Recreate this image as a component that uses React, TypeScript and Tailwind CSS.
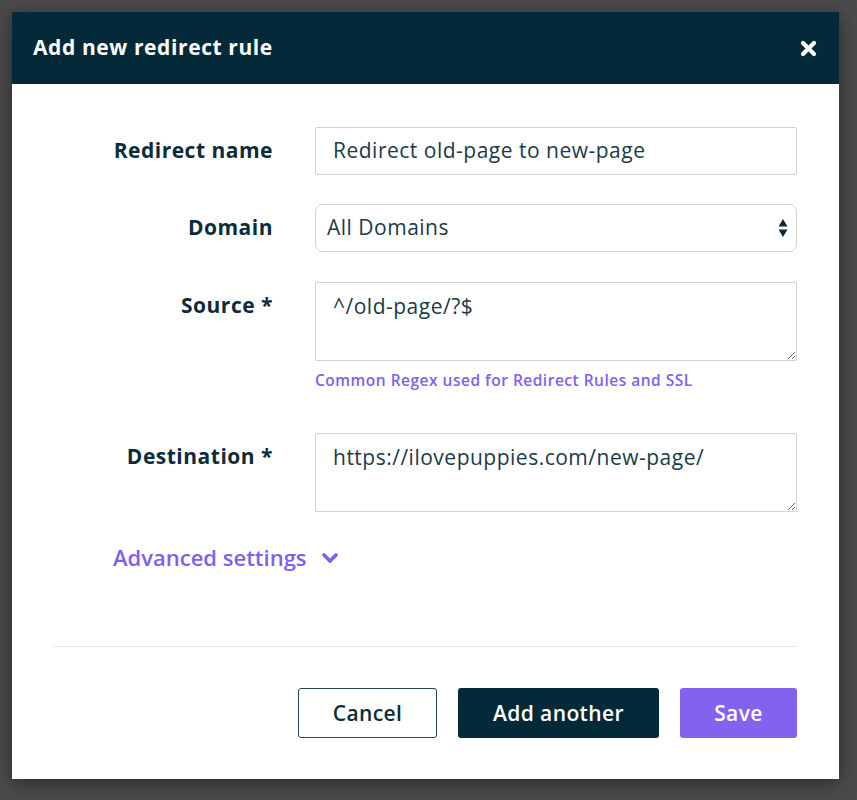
import React from "react";

const font = { fontFamily: '"Open Sans", "Noto Sans", sans-serif' };

function CloseIcon() {
  return (
    <svg width="17" height="17" viewBox="0 0 17 17" aria-hidden="true">
      <path d="M3 3 L14 14 M14 3 L3 14" stroke="#ffffff" strokeWidth="4.2" strokeLinecap="round" />
    </svg>
  );
}

function SelectArrows() {
  return (
    <svg width="10" height="20" viewBox="0 0 10 20" aria-hidden="true">
      <path d="M5 1 L9.5 8.5 L0.5 8.5 Z" fill="#0b2b3a" />
      <path d="M5 19 L9.5 11.5 L0.5 11.5 Z" fill="#0b2b3a" />
    </svg>
  );
}

function Chevron() {
  return (
    <svg width="18" height="12" viewBox="0 0 18 12" aria-hidden="true">
      <path d="M3 3 L9 9 L15 3" stroke="#7f5ff0" strokeWidth="3.6" fill="none" strokeLinecap="round" strokeLinejoin="round" />
    </svg>
  );
}

export default function App() {
  return (
    <div className="w-[857px] h-[800px] bg-[#4b4b4b] pt-[12px] pl-[12px] overflow-hidden" style={font}>
      <div className="w-[827px] h-[767px] bg-white flex flex-col shadow-[0_4px_18px_rgba(0,0,0,0.45)]">
        <div className="h-[72px] bg-[#042a3a] flex items-center justify-between pl-[21px] pr-[22px] shrink-0">
          <h1 className="text-white text-[21px] font-bold tracking-[0.6px]">Add new redirect rule</h1>
          <CloseIcon />
        </div>

        <div className="flex flex-col pl-[41px] pr-[42px] pt-[43px] text-[#0c2c3b]">
          <div className="grid grid-cols-[220px_482px] gap-x-[42px]">
            <label className="h-[48px] flex items-center justify-end text-[21px] font-bold tracking-[0.5px]">Redirect name</label>
            <div className="h-[48px] border border-[#cfd3d6] rounded-[2px] flex items-center pl-[17px] text-[21px] tracking-[0.5px] text-[#1b3a48]">
              Redirect old-page to new-page
            </div>

            <label className="mt-[29px] h-[48px] flex items-center justify-end text-[21px] font-bold tracking-[0.5px]">Domain</label>
            <div className="mt-[29px] h-[48px] border border-[#cfd3d6] rounded-[8px] flex items-center justify-between pl-[11px] pr-[8px] text-[21px] tracking-[0.5px] text-[#1b3a48]">
              <span>All Domains</span>
              <SelectArrows />
            </div>

            <label className="mt-[30px] pt-[8px] flex justify-end text-[21px] font-bold tracking-[0.5px]">Source *</label>
            <div className="mt-[30px] flex flex-col">
              <textarea
                readOnly
                defaultValue="^/old-page/?$"
                className="h-[79px] border border-[#cfd3d6] rounded-[1px] pl-[17px] pt-[8px] text-[21px] tracking-[0.5px] text-[#1b3a48] outline-none"
              />
              <a className="mt-[8px] text-[15.5px] font-semibold tracking-[0.5px] text-[#8060f0]">Common Regex used for Redirect Rules and SSL</a>
            </div>

            <label className="mt-[41px] pt-[8px] flex justify-end text-[21px] font-bold tracking-[0.5px]">Destination *</label>
            <textarea
              readOnly
              defaultValue="https://ilovepuppies.com/new-page/"
              className="mt-[41px] h-[79px] border border-[#cfd3d6] rounded-[1px] pl-[17px] pt-[8px] text-[21px] tracking-[0.5px] text-[#1b3a48] outline-none"
            />
          </div>

          <div className="mt-[29px] ml-[60px] flex items-center gap-[14px] text-[22px] font-semibold text-[#7f5ff0]">
            <span>Advanced settings</span>
            <Chevron />
          </div>

          <div className="mt-[72px] h-px bg-[#e3e5e6]" />

          <div className="mt-[41px] flex justify-end gap-[21px]">
            <button className="w-[139px] h-[50px] border border-[#2a4652] rounded-[3px] bg-white text-[21px] font-semibold tracking-[0.4px] text-[#0c2c3b]">
              Cancel
            </button>
            <button className="w-[201px] h-[50px] rounded-[3px] bg-[#042a3a] text-[21px] font-semibold tracking-[0.4px] text-white">
              Add another
            </button>
            <button className="w-[117px] h-[50px] rounded-[3px] bg-[#8362f0] text-[21px] font-semibold tracking-[0.4px] text-white">
              Save
            </button>
          </div>
        </div>
      </div>
    </div>
  );
}
